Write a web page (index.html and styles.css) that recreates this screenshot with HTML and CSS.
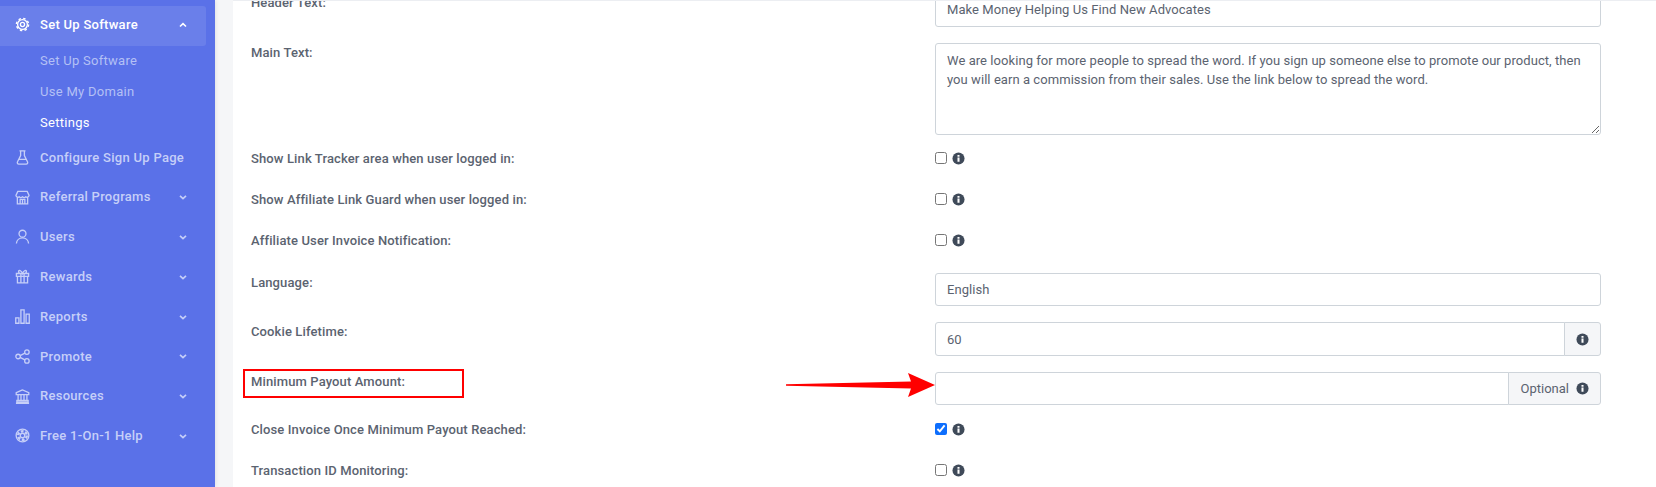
FILE: index.html
```html
<!DOCTYPE html>
<html>
	<head>
		<meta charset="UTF-8">
		<title>Settings</title>
		<link rel="stylesheet" href="styles.css">
	</head>
	<body>
		<svg class="defs" width="0" height="0">
			<symbol id="info" viewBox="0 0 14 14">
				<circle cx="7" cy="7" r="6.5" fill="currentColor"/>
				<rect x="5.9" y="5.9" width="2.2" height="4.6" fill="#fff"/>
				<rect x="5.9" y="3.2" width="2.2" height="1.9" fill="#fff"/>
			</symbol>
		</svg>
		<div id="wrap">
			<div id="side">
				<a href="javascript:;" class="item active">
					<svg class="ico" viewBox="0 0 16 16"><circle cx="8" cy="8" r="5.200"/><circle cx="8" cy="8" r="6.500" stroke-width="1.500" stroke-dasharray="2.600 2.500"/><circle cx="8" cy="8" r="2.200"/></svg>
					<span>Set Up Software</span>
					<svg class="arr" viewBox="0 0 10 10"><path d="M2 6.500 5 3.600l3 2.900"/></svg>
				</a>
				<div class="sub">
					<a href="javascript:;">Set Up Software</a>
					<a href="javascript:;">Use My Domain</a>
					<a href="javascript:;" class="on">Settings</a>
				</div>
				<a href="javascript:;" class="item">
					<svg class="ico" viewBox="0 0 16 16"><path d="M4.800 1h6.400M6 1v5L2.700 12.600c-.6 1.200 0 2.400 1.300 2.400h8c1.300 0 1.900-1.200 1.300-2.400L10 6V1M4.600 10h6.800"/></svg>
					<span>Configure Sign Up Page</span>
				</a>
				<a href="javascript:;" class="item">
					<svg class="ico" viewBox="0 0 16 16"><path d="M3 1.500h10l2 4.300a2.200 2.200 0 0 1-3.500 1.500 2.600 2.600 0 0 1-3.500 0 2.600 2.600 0 0 1-3.500 0A2.200 2.200 0 0 1 1 5.800zM2.500 8v6.800h11V8M5.500 14.800V10h5v4.800M8 10v4.800"/></svg>
					<span>Referral Programs</span>
					<svg class="arr" viewBox="0 0 10 10"><path d="M2 3.800 5 6.700l3-2.900"/></svg>
				</a>
				<a href="javascript:;" class="item">
					<svg class="ico" viewBox="0 0 16 16"><circle cx="8" cy="5" r="3.700"/><path d="M1.500 15.500c.3-3.600 3.100-6 6.500-6s6.200 2.400 6.500 6"/></svg>
					<span>Users</span>
					<svg class="arr" viewBox="0 0 10 10"><path d="M2 3.800 5 6.700l3-2.900"/></svg>
				</a>
				<a href="javascript:;" class="item">
					<svg class="ico" viewBox="0 0 16 16"><path d="M1.500 4.800h13v3h-13zM2.600 7.800v7h10.800v-7M6.300 4.800v10M9.700 4.800v10M8 4.800C6.800 1.300 3.800.8 3.800 2.800c0 1.300 2 2 4.200 2s4.200-.7 4.200-2c0-2-3-1.500-4.200 2z"/></svg>
					<span>Rewards</span>
					<svg class="arr" viewBox="0 0 10 10"><path d="M2 3.800 5 6.700l3-2.900"/></svg>
				</a>
				<a href="javascript:;" class="item">
					<svg class="ico" viewBox="0 0 16 16"><path d="M.8 9.500h3.400v5.700H.8zM6.300 1h3.400v14.200H6.300zM11.800 5.500h3.400v9.700h-3.400z"/></svg>
					<span>Reports</span>
					<svg class="arr" viewBox="0 0 10 10"><path d="M2 3.800 5 6.700l3-2.900"/></svg>
				</a>
				<a href="javascript:;" class="item">
					<svg class="ico" viewBox="0 0 16 16"><circle cx="3.300" cy="8" r="2.400"/><circle cx="12.700" cy="3.300" r="2.400"/><circle cx="12.700" cy="12.700" r="2.400"/><path d="M5.500 7 10.500 4.400M5.500 9l5 2.600"/></svg>
					<span>Promote</span>
					<svg class="arr" viewBox="0 0 10 10"><path d="M2 3.800 5 6.700l3-2.900"/></svg>
				</a>
				<a href="javascript:;" class="item">
					<svg class="ico" viewBox="0 0 16 16"><path d="M8 1 1.300 4v2h13.400V4zM3.300 6v6M6.400 6v6M9.600 6v6M12.700 6v6M2 12.200h12v1.500H2zM1 15.200h14"/></svg>
					<span>Resources</span>
					<svg class="arr" viewBox="0 0 10 10"><path d="M2 3.800 5 6.700l3-2.900"/></svg>
				</a>
				<a href="javascript:;" class="item">
					<svg class="ico" viewBox="0 0 16 16"><circle cx="8" cy="8" r="6.800"/><circle cx="8" cy="8" r="2.400"/><circle cx="8" cy="8" r="4.600" stroke-width="2.600" stroke-dasharray="3 1.820"/></svg>
					<span>Free 1-On-1 Help</span>
					<svg class="arr" viewBox="0 0 10 10"><path d="M2 3.800 5 6.700l3-2.900"/></svg>
				</a>
			</div>
			<div id="main">
				<div id="card">
					<div class="row">
						<label>Header Text:</label>
						<div class="ctl"><input class="txt" type="text" value="Make Money Helping Us Find New Advocates"></div>
					</div>
					<div class="row">
						<label>Main Text:</label>
						<div class="ctl"><textarea class="txt area">We are looking for more people to spread the word. If you sign up someone else to promote our product, then you will earn a commission from their sales. Use the link below to spread the word.</textarea></div>
					</div>
					<div class="row chk first">
						<label>Show Link Tracker area when user logged in:</label>
						<div class="ctl"><input type="checkbox"><svg class="inf"><use href="#info"/></svg></div>
					</div>
					<div class="row chk">
						<label>Show Affiliate Link Guard when user logged in:</label>
						<div class="ctl"><input type="checkbox"><svg class="inf"><use href="#info"/></svg></div>
					</div>
					<div class="row chk">
						<label>Affiliate User Invoice Notification:</label>
						<div class="ctl"><input type="checkbox"><svg class="inf"><use href="#info"/></svg></div>
					</div>
					<div class="row">
						<label>Language:</label>
						<div class="ctl"><input class="txt" type="text" value="English"></div>
					</div>
					<div class="row">
						<label>Cookie Lifetime:</label>
						<div class="ctl group">
							<input class="txt" type="text" value="60">
							<span class="addon"><svg class="inf"><use href="#info"/></svg></span>
						</div>
					</div>
					<div class="row">
						<label class="mark">Minimum Payout Amount:</label>
						<div class="ctl group">
							<svg id="arrow" viewBox="0 0 149 24"><path d="M0 11.200 125 8.500 122 0 149 12 122 24 125 15.500 0 12.800z"/></svg>
							<input class="txt" type="text">
							<span class="addon long">Optional<svg class="inf gap"><use href="#info"/></svg></span>
						</div>
					</div>
					<div class="row chk">
						<label>Close Invoice Once Minimum Payout Reached:</label>
						<div class="ctl"><input type="checkbox" checked><svg class="inf"><use href="#info"/></svg></div>
					</div>
					<div class="row chk">
						<label>Transaction ID Monitoring:</label>
						<div class="ctl"><input type="checkbox"><svg class="inf"><use href="#info"/></svg></div>
					</div>
				</div>
			</div>
		</div>
	</body>
</html>
```

FILE: styles.css
```css
*{
	box-sizing: border-box;
}
html, body{
	height: 100%;
}
body{
	margin: 0;
	overflow: hidden;
	font-family: Roboto, sans-serif;
	font-size: 13px;
	line-height: 19.5px;
	color: #5b6370;
	background-color: #f5f6f8;
}
.defs{
	display: block;
	height: 0;
}
#wrap{
	display: flex;
	height: 100%;
}
#side{
	width: 215px;
	flex: none;
	padding-top: 6px;
	padding-right: 9px;
	background-color: #5a71e8;
	box-shadow: 0 0 5px rgba(0,0,0,.12);
}
#side a{
	text-decoration: none;
	display: block;
	letter-spacing: .28px;
}
#side .item{
	display: flex;
	align-items: center;
	height: 39.8px;
	padding: 0 18px 3px 15px;
	font-weight: 500;
	color: #c6cff8;
	border-radius: 0 3px 3px 0;
}
#side .item span{
	flex: 1;
	margin-left: 10px;
}
#side .active{
	height: 40px;
	background-color: rgba(255,255,255,.1);
	color: #fff;
}
.ico{
	width: 15px;
	height: 15px;
	flex: none;
	fill: none;
	stroke: currentColor;
	stroke-width: 1.4;
}
.arr{
	width: 10px;
	height: 10px;
	flex: none;
	fill: none;
	stroke: currentColor;
	stroke-width: 1.6;
}
.sub{
	margin-top: -1px;
	margin-bottom: 1px;
}
.sub a{
	height: 31px;
	line-height: 32px;
	padding-left: 40px;
	color: #b4c0f5;
}
.sub a.on{
	color: #fff;
}
#main{
	flex: 1;
	padding-left: 18px;
	min-width: 0;
}
#card{
	height: 100%;
	padding: 0 55px 0 18px;
	background-color: #fff;
	border-top: 1px solid #eceef2;
	overflow: hidden;
}
.row{
	display: flex;
	margin-bottom: 16px;
}
.row:first-child{
	margin-top: -8px;
}
.row label{
	width: 684px;
	flex: none;
	font-weight: 500;
	letter-spacing: .12px;
}
.row.chk{
	height: 25px;
}
.row.first{
	margin-top: -.7px;
}
.row.chk label{
	margin-top: -1px;
}
.row.chk .ctl{
	display: flex;
	align-items: flex-start;
	padding-top: 2px;
}
.ctl{
	flex: 1;
}
.ctl input[type=checkbox]{
	width: 12px;
	height: 12px;
	margin: 0;
	accent-color: #0d6efd;
}
.txt{
	display: block;
	width: 100%;
	height: 33.5px;
	padding: 0 11px;
	border: 1px solid #ced4da;
	border-radius: 3px;
	font-family: Roboto, sans-serif;
	font-size: 13px;
	letter-spacing: .06px;
	color: #5b6370;
	background-color: #fff;
	outline: none;
}
.area{
	height: 92px;
	padding: 7px 11px;
	line-height: 19.5px;
	resize: vertical;
}
.inf{
	width: 13px;
	height: 13px;
	color: #3f4a59;
	flex: none;
}
.chk .inf{
	margin-left: 5px;
}
.group{
	position: relative;
	display: flex;
}
.group .txt{
	flex: 1;
	border-radius: 3px 0 0 3px;
}
.addon{
	display: flex;
	align-items: center;
	height: 33.5px;
	padding: 0 11px;
	margin-left: -1px;
	border: 1px solid #ced4da;
	border-radius: 0 3px 3px 0;
	background-color: #f5f6f8;
}
.addon.long{
	padding-left: 12px;
}
.addon .gap{
	margin-left: 7px;
}
.mark{
	position: relative;
}
.mark::before{
	content: "";
	position: absolute;
	left: -8px;
	top: -3px;
	width: 220px;
	height: 25px;
	border: 2px solid #f00;
}
.row label.mark::before{
	width: 217px;
}
#arrow{
	position: absolute;
	left: -149px;
	top: 1px;
	width: 149px;
	height: 24px;
	fill: #f00;
}
```
